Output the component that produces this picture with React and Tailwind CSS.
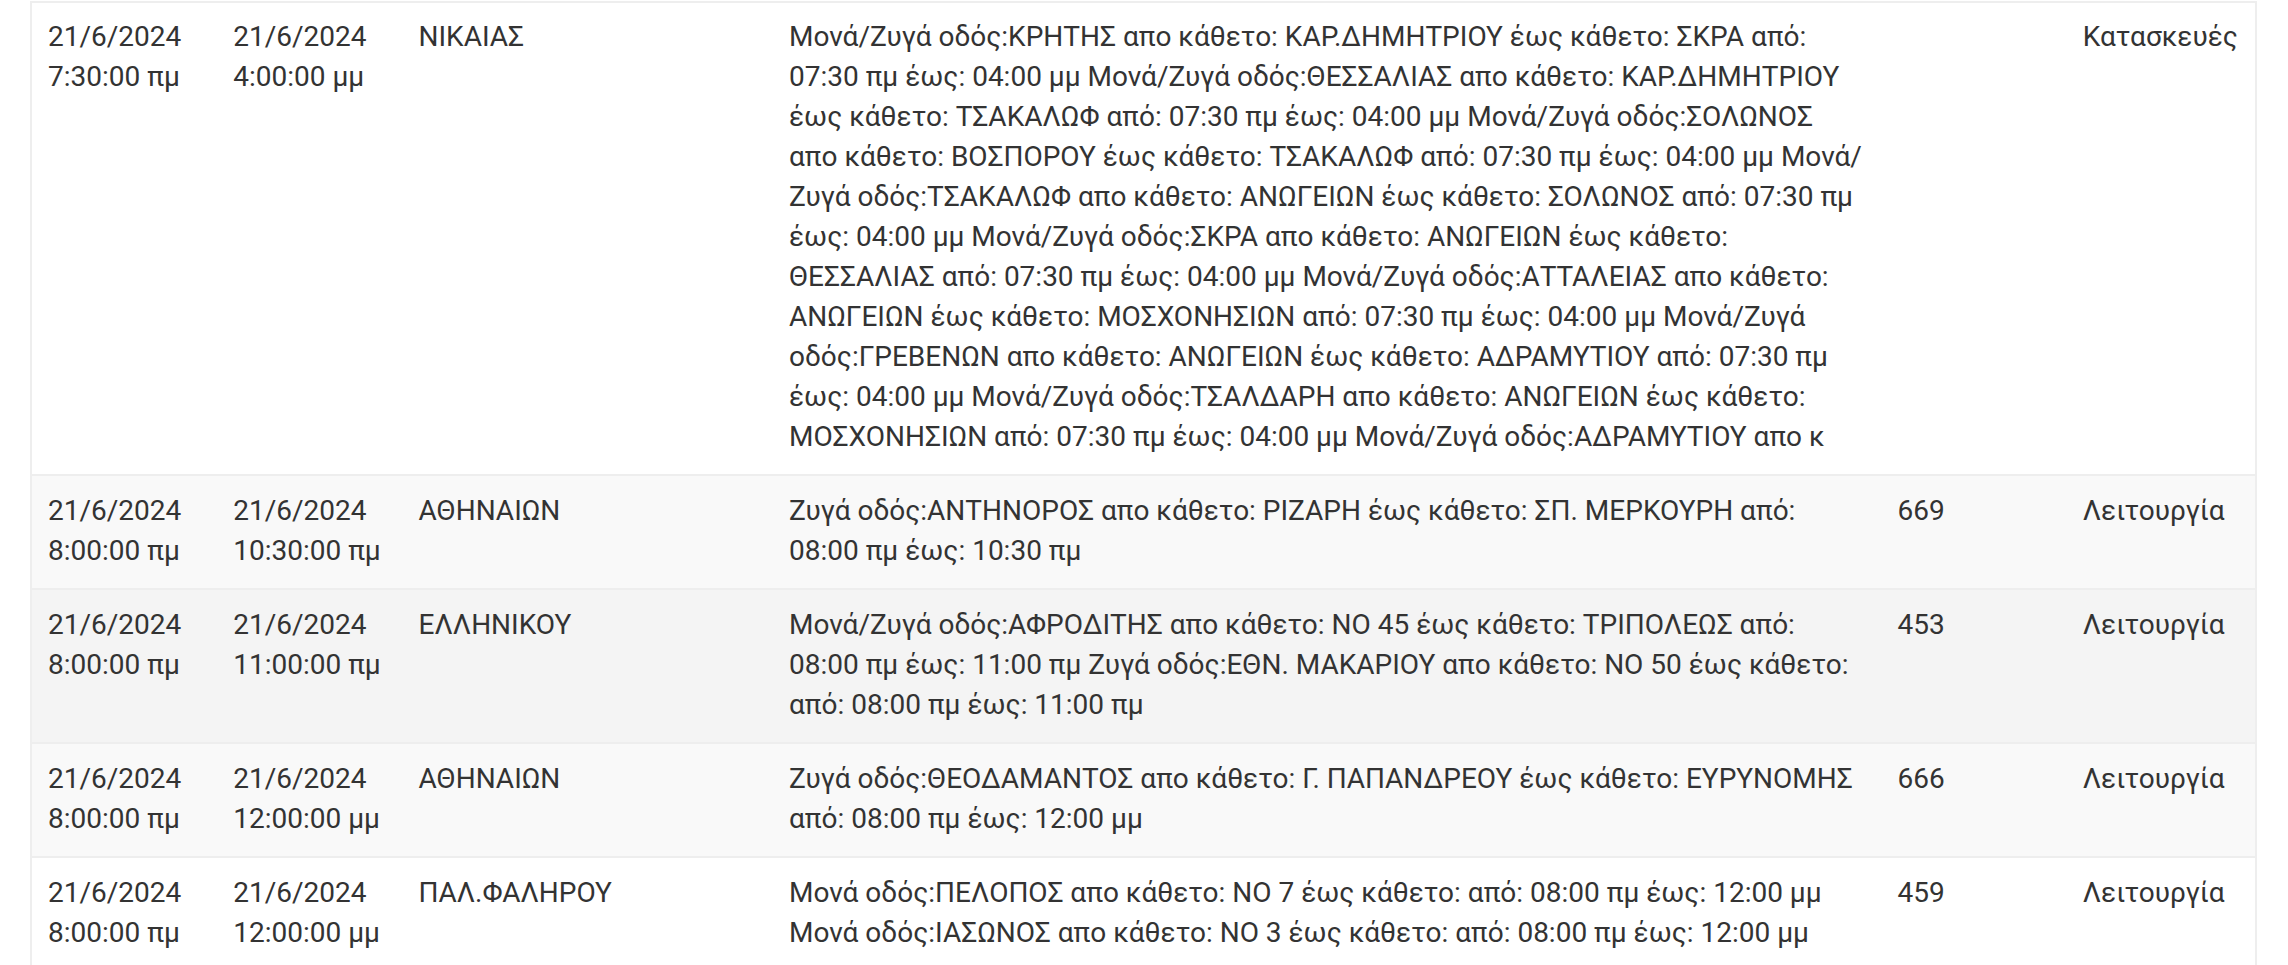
const rows = [
  {
    from: "21/6/2024 7:30:00 πμ",
    to: "21/6/2024 4:00:00 μμ",
    area: "ΝΙΚΑΙΑΣ",
    desc:
      "Μονά/Ζυγά οδός:ΚΡΗΤΗΣ απο κάθετο: ΚΑΡ.ΔΗΜΗΤΡΙΟΥ έως κάθετο: ΣΚΡΑ από: 07:30 πμ έως: 04:00 μμ Μονά/Ζυγά οδός:ΘΕΣΣΑΛΙΑΣ απο κάθετο: ΚΑΡ.ΔΗΜΗΤΡΙΟΥ έως κάθετο: ΤΣΑΚΑΛΩΦ από: 07:30 πμ έως: 04:00 μμ Μονά/Ζυγά οδός:ΣΟΛΩΝΟΣ απο κάθετο: ΒΟΣΠΟΡΟΥ έως κάθετο: ΤΣΑΚΑΛΩΦ από: 07:30 πμ έως: 04:00 μμ Μονά/Ζυγά οδός:ΤΣΑΚΑΛΩΦ απο κάθετο: ΑΝΩΓΕΙΩΝ έως κάθετο: ΣΟΛΩΝΟΣ από: 07:30 πμ έως: 04:00 μμ Μονά/Ζυγά οδός:ΣΚΡΑ απο κάθετο: ΑΝΩΓΕΙΩΝ έως κάθετο: ΘΕΣΣΑΛΙΑΣ από: 07:30 πμ έως: 04:00 μμ Μονά/Ζυγά οδός:ΑΤΤΑΛΕΙΑΣ απο κάθετο: ΑΝΩΓΕΙΩΝ έως κάθετο: ΜΟΣΧΟΝΗΣΙΩΝ από: 07:30 πμ έως: 04:00 μμ Μονά/Ζυγά οδός:ΓΡΕΒΕΝΩΝ απο κάθετο: ΑΝΩΓΕΙΩΝ έως κάθετο: ΑΔΡΑΜΥΤΙΟΥ από: 07:30 πμ έως: 04:00 μμ Μονά/Ζυγά οδός:ΤΣΑΛΔΑΡΗ απο κάθετο: ΑΝΩΓΕΙΩΝ έως κάθετο: ΜΟΣΧΟΝΗΣΙΩΝ από: 07:30 πμ έως: 04:00 μμ Μονά/Ζυγά οδός:ΑΔΡΑΜΥΤΙΟΥ απο κ",
    line: "",
    type: "Κατασκευές",
    bg: "bg-white",
  },
  {
    from: "21/6/2024 8:00:00 πμ",
    to: "21/6/2024 10:30:00 πμ",
    area: "ΑΘΗΝΑΙΩΝ",
    desc: "Ζυγά οδός:ΑΝΤΗΝΟΡΟΣ απο κάθετο: ΡΙΖΑΡΗ έως κάθετο: ΣΠ. ΜΕΡΚΟΥΡΗ από: 08:00 πμ έως: 10:30 πμ",
    line: "669",
    type: "Λειτουργία",
    bg: "bg-[#f9f9f9]",
  },
  {
    from: "21/6/2024 8:00:00 πμ",
    to: "21/6/2024 11:00:00 πμ",
    area: "ΕΛΛΗΝΙΚΟΥ",
    desc: "Μονά/Ζυγά οδός:ΑΦΡΟΔΙΤΗΣ απο κάθετο: ΝΟ 45 έως κάθετο: ΤΡΙΠΟΛΕΩΣ από: 08:00 πμ έως: 11:00 πμ Ζυγά οδός:ΕΘΝ. ΜΑΚΑΡΙΟΥ απο κάθετο: ΝΟ 50 έως κάθετο: από: 08:00 πμ έως: 11:00 πμ",
    line: "453",
    type: "Λειτουργία",
    bg: "bg-[#f4f4f4]",
  },
  {
    from: "21/6/2024 8:00:00 πμ",
    to: "21/6/2024 12:00:00 μμ",
    area: "ΑΘΗΝΑΙΩΝ",
    desc: "Ζυγά οδός:ΘΕΟΔΑΜΑΝΤΟΣ απο κάθετο: Γ. ΠΑΠΑΝΔΡΕΟΥ έως κάθετο: ΕΥΡΥΝΟΜΗΣ από: 08:00 πμ έως: 12:00 μμ",
    line: "666",
    type: "Λειτουργία",
    bg: "bg-[#f9f9f9]",
  },
  {
    from: "21/6/2024 8:00:00 πμ",
    to: "21/6/2024 12:00:00 μμ",
    area: "ΠΑΛ.ΦΑΛΗΡΟΥ",
    desc: "Μονά οδός:ΠΕΛΟΠΟΣ απο κάθετο: ΝΟ 7 έως κάθετο: από: 08:00 πμ έως: 12:00 μμ Μονά οδός:ΙΑΣΩΝΟΣ απο κάθετο: ΝΟ 3 έως κάθετο: από: 08:00 πμ έως: 12:00 μμ",
    line: "459",
    type: "Λειτουργία",
    bg: "bg-white",
  },
]

function Row({ r, first }) {
  const pad = first ? "pt-[14px] pb-[17px]" : "pt-[15px] pb-[17px]"
  return (
    <div className={`grid grid-cols-12 border-t-2 border-[#eeeeee] ${r.bg}`}>
      <div className={`col-span-1 px-4 ${pad}`}>{r.from}</div>
      <div className={`col-span-1 px-4 ${pad}`}>{r.to}</div>
      <div className={`col-span-2 px-4 ${pad}`}>{r.area}</div>
      <div className={`col-span-6 pl-4 pr-5 ${pad}`}>{r.desc}</div>
      <div className={`col-span-1 pl-[13px] pr-4 ${pad}`}>{r.line}</div>
      <div className={`col-span-1 pl-[13px] pr-4 ${pad}`}>{r.type}</div>
    </div>
  )
}

export default function App() {
  return (
    <div
      className="h-[965px] overflow-hidden bg-white pl-[30px] pr-[31px] pt-px text-[28px] leading-[40px] text-[#333]"
      style={{ fontFamily: "Roboto, 'Noto Sans', sans-serif" }}
    >
      <div className="border-x-2 border-[#eeeeee]">
        {rows.map((r, i) => (
          <Row key={i} r={r} first={i === 0} />
        ))}
      </div>
    </div>
  )
}
